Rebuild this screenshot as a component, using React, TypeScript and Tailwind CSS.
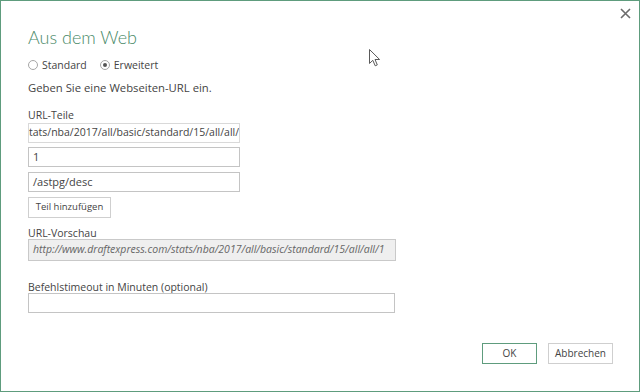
const FONT = "font-['Open_Sans',sans-serif]";

function Radio({ checked, label }: { checked?: boolean; label: string }) {
	return (
		<label className="flex items-center gap-[4px]">
			<span className="flex h-[10px] w-[10px] items-center justify-center rounded-full border border-[#a6a6a6] bg-white">
				{checked && <span className="h-[4px] w-[4px] rounded-full bg-[#555]" />}
			</span>
			<span>{label}</span>
		</label>
	);
}

function CloseIcon() {
	return (
		<svg width="11" height="11" viewBox="0 0 11 11" aria-hidden="true">
			<path d="M1 1 10 10M10 1 1 10" stroke="#6b6b6b" strokeWidth="1.6" />
		</svg>
	);
}

function Cursor() {
	return (
		<svg width="12" height="18" viewBox="0 0 12 18" aria-hidden="true">
			<path
				d="M0.5 0.5V14.5L3.8 11.3L6.2 16.8L8.3 15.9L6 10.5H10.6Z"
				fill="#fff"
				stroke="#5a5a5a"
				strokeWidth="1"
				strokeLinejoin="round"
			/>
		</svg>
	);
}

export default function App() {
	return (
		<div
			className={`relative flex h-[392px] w-[640px] flex-col border border-[#5e9c7d] bg-white text-[#444] ${FONT}`}
		>
			<div className="flex h-[24px] justify-end pr-[8px] pt-[7px]">
				<CloseIcon />
			</div>

			<div className="absolute left-[368px] top-[48px]">
				<Cursor />
			</div>

			<div className="flex flex-col pl-[27px]">
				<h1 className="font-['Lato',sans-serif] text-[18px] font-light leading-[24px] text-[#4a8a69]">
					Aus dem Web
				</h1>

				<div className="mt-[8px] flex items-center gap-[13px] text-[10.5px] leading-[16px]">
					<Radio label="Standard" />
					<Radio checked label="Erweitert" />
				</div>

				<p className="mt-[7px] text-[11.3px] leading-[16px]">
					Geben Sie eine Webseiten-URL ein.
				</p>

				<p className="mt-[12px] text-[10.5px] leading-[14px]">URL-Teile</p>

				<div className="mt-[1px] flex h-[20px] w-[212px] items-center overflow-hidden border border-[#d9d9d9] bg-white text-[10.5px] whitespace-nowrap">
					tats/nba/2017/all/basic/standard/15/all/all/
				</div>
				<div className="mt-[4px] flex h-[20px] w-[212px] items-center border border-[#c4c4c4] px-[4px] text-[11px]">
					1
				</div>
				<div className="mt-[5px] flex h-[20px] w-[212px] items-center border border-[#c4c4c4] px-[4px] text-[11px]">
					/astpg/desc
				</div>

				<button className="mt-[5px] flex h-[21px] w-[83px] items-center justify-center border border-[#cfcfcf] bg-white text-[9.5px] text-[#444]">
					Teil hinzufügen
				</button>

				<p className="mt-[8px] text-[10.5px] leading-[14px]">URL-Vorschau</p>

				<div className="mt-[-1px] flex h-[22px] w-[368px] items-center overflow-hidden border border-[#c9c9c9] bg-[#efefef] pl-[4px] text-[10.5px] italic whitespace-nowrap text-[#666]">
					http://www.draftexpress.com/stats/nba/2017/all/basic/standard/15/all/all/1
				</div>

				<p className="mt-[19px] text-[10.5px] leading-[14px]">
					Befehlstimeout in Minuten (optional)
				</p>

				<div className="mt-[-1px] h-[20px] w-[367px] border border-[#c4c4c4] bg-white" />
			</div>

			<div className="mt-auto flex justify-end gap-[11px] pb-[27px] pr-[26px] text-[10px]">
				<button className="flex h-[21px] w-[55px] items-center justify-center border border-[#5e9c7d] bg-white text-[#444]">
					OK
				</button>
				<button className="flex h-[21px] w-[65px] items-center justify-center border border-[#cfcfcf] bg-white text-[#444]">
					Abbrechen
				</button>
			</div>
		</div>
	);
}
